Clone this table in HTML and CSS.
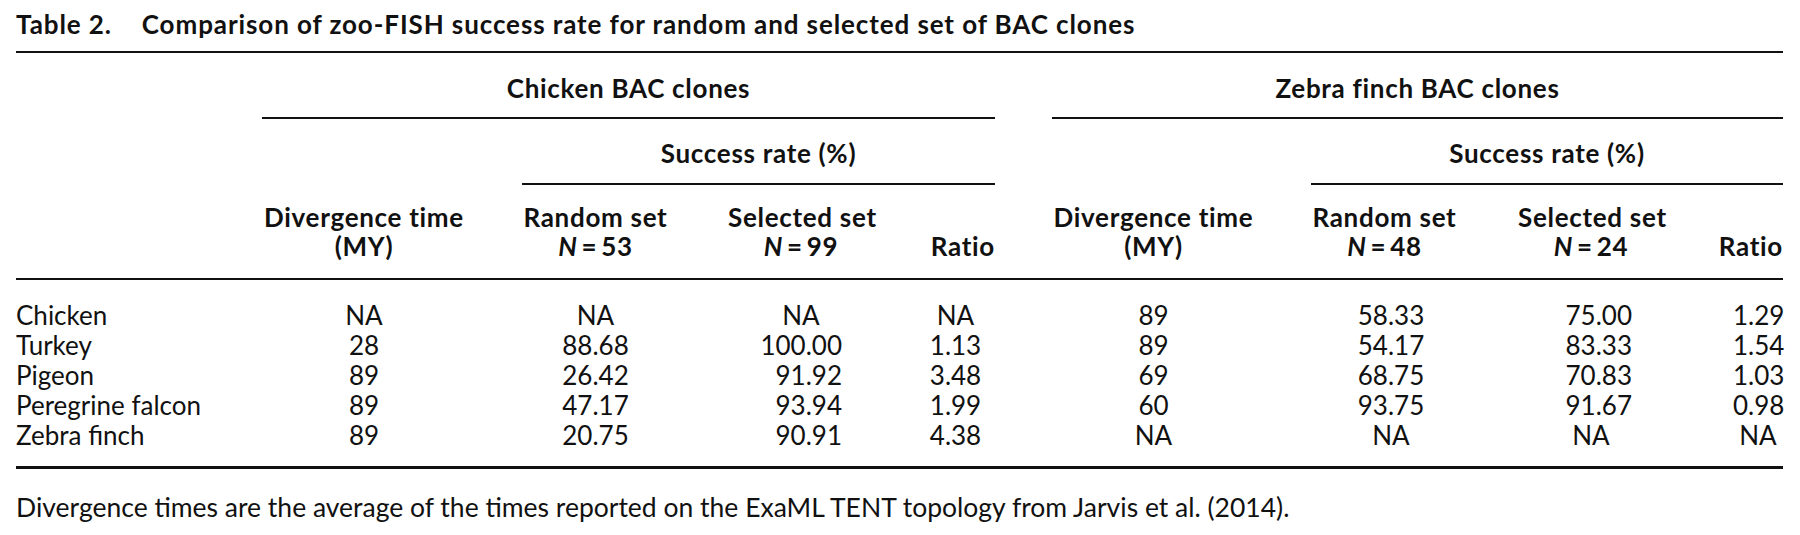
FILE: index.html
```html
<!DOCTYPE html>
<html>
<head>
<meta charset="utf-8">
<title>Table 2</title>
<link rel="stylesheet" href="styles.css">
</head>
<body>
<div class="doc">
  <div class="title"><span class="label">Table 2.</span>Comparison of zoo-FISH success rate for random and selected set of BAC clones</div>
  <table class="tbl">
    <colgroup>
      <col class="c-stub"><col class="c-div"><col class="c-rand"><col class="c-sel"><col class="c-ratio">
      <col class="c-gap">
      <col class="c-div2"><col class="c-rand2"><col class="c-sel2"><col class="c-ratio2">
    </colgroup>
    <thead>
      <tr class="r-group">
        <th></th>
        <th colspan="4" class="ruled">Chicken BAC clones</th>
        <th></th>
        <th colspan="4" class="ruled">Zebra finch BAC clones</th>
      </tr>
      <tr class="r-sub">
        <th></th><th></th>
        <th colspan="3" class="ruled">Success rate (%)</th>
        <th></th><th></th>
        <th colspan="3" class="ruled">Success rate (%)</th>
      </tr>
      <tr class="r-cols">
        <th></th>
        <th class="p-div">Divergence time<br>(MY)</th>
        <th class="p-rand">Random set<br><i>N</i>&thinsp;=&thinsp;53</th>
        <th class="p-sel">Selected set<br><i>N</i>&thinsp;=&thinsp;99</th>
        <th class="p-ratio">Ratio</th>
        <th></th>
        <th class="p-div">Divergence time<br>(MY)</th>
        <th class="p-rand2">Random set<br><i>N</i>&thinsp;=&thinsp;48</th>
        <th class="p-sel2">Selected set<br><i>N</i>&thinsp;=&thinsp;24</th>
        <th class="p-ratio">Ratio</th>
      </tr>
    </thead>
    <tbody>
      <tr>
        <td class="stub">Chicken</td>
        <td class="p-div">NA</td><td class="p-rand">NA</td><td class="p-sel">NA</td><td class="d-ratio">NA</td>
        <td></td>
        <td class="p-div">89</td><td class="d-rand2">58.33</td><td class="p-sel2"><span class="num">75.00</span></td><td class="d-ratio2">1.29</td>
      </tr>
      <tr>
        <td class="stub">Turkey</td>
        <td class="p-div">28</td><td class="p-rand">88.68</td><td class="p-sel"><span class="num">100.00</span></td><td class="d-ratio">1.13</td>
        <td></td>
        <td class="p-div">89</td><td class="d-rand2">54.17</td><td class="p-sel2"><span class="num">83.33</span></td><td class="d-ratio2">1.54</td>
      </tr>
      <tr>
        <td class="stub">Pigeon</td>
        <td class="p-div">89</td><td class="p-rand">26.42</td><td class="p-sel"><span class="num">91.92</span></td><td class="d-ratio">3.48</td>
        <td></td>
        <td class="p-div">69</td><td class="d-rand2">68.75</td><td class="p-sel2"><span class="num">70.83</span></td><td class="d-ratio2">1.03</td>
      </tr>
      <tr>
        <td class="stub">Peregrine falcon</td>
        <td class="p-div">89</td><td class="p-rand">47.17</td><td class="p-sel"><span class="num">93.94</span></td><td class="d-ratio">1.99</td>
        <td></td>
        <td class="p-div">60</td><td class="d-rand2">93.75</td><td class="p-sel2"><span class="num">91.67</span></td><td class="d-ratio2">0.98</td>
      </tr>
      <tr>
        <td class="stub">Zebra finch</td>
        <td class="p-div">89</td><td class="p-rand">20.75</td><td class="p-sel"><span class="num">90.91</span></td><td class="d-ratio">4.38</td>
        <td></td>
        <td class="p-div">NA</td><td class="d-rand2">NA</td><td class="p-sel2">NA</td><td class="d-ratio2">NA</td>
      </tr>
    </tbody>
  </table>
  <p class="note">Divergence times are the average of the times reported on the ExaML TENT topology from Jarvis et al. (2014).</p>
</div>
</body>
</html>
```

FILE: styles.css
```css
* { box-sizing: border-box; }
html, body { margin: 0; padding: 0; background: #fff; }
body {
  font-family: Lato, "Open Sans", "Liberation Sans", sans-serif;
  font-size: 26px;
  color: #111;
}
.doc { padding: 9px 0 0 16px; width: 1800px; }

.title {
  width: 1767px;
  font-weight: 700;
  font-size: 26px;
  letter-spacing: 0.9px;
  line-height: 30px;
  padding-bottom: 12px;
  border-bottom: 2px solid #111;
  white-space: nowrap;
}
.label { margin-right: 30px; }

.tbl {
  width: 1767px;
  border-collapse: collapse;
  table-layout: fixed;
}
.c-stub { width: 246px; }
.c-div { width: 260px; }
.c-rand { width: 206px; }
.c-sel { width: 188px; }
.c-ratio { width: 79px; }
.c-gap { width: 57px; }
.c-div2 { width: 259px; }
.c-rand2 { width: 207px; }
.c-sel2 { width: 185px; }
.c-ratio2 { width: 80px; }

.tbl th, .tbl td { padding: 0; text-align: center; white-space: nowrap; }
.tbl th { font-weight: 700; font-size: 26px; letter-spacing: 0.7px; }

.r-group th { padding-top: 20px; padding-bottom: 14px; line-height: 30px; }
.r-sub th { padding-top: 19px; padding-bottom: 15px; line-height: 30px; }
.ruled { border-bottom: 2px solid #111; }

.r-cols { border-bottom: 2px solid #111; }
.r-cols th {
  line-height: 29px;
  padding-top: 18px;
  padding-bottom: 17px;
  vertical-align: bottom;
}

.tbl td { line-height: 30px; }
.tbl tbody tr:first-child td { padding-top: 20px; }
.tbl tbody tr:last-child td { padding-bottom: 16px; }
.tbl tbody { border-bottom: 3px solid #111; }

.tbl .stub { text-align: left; }
.tbl .p-div { padding-right: 56px; }
.tbl .p-rand { padding-right: 59px; }
.tbl .p-sel { padding-right: 42px; }
.tbl .p-rand2 { padding-right: 60px; }
.tbl .d-rand2 { padding-right: 47px; }
.tbl .p-sel2 { padding-right: 39px; }
.tbl .p-ratio { text-align: right; }
.tbl .d-ratio { text-align: center; }
.tbl .d-ratio2 { text-align: center; padding-left: 30px; }

.num { display: inline-block; width: 82px; text-align: right; }

.note {
  margin: 23px 0 0;
  font-size: 26.5px;
  line-height: 30px;
}
```
